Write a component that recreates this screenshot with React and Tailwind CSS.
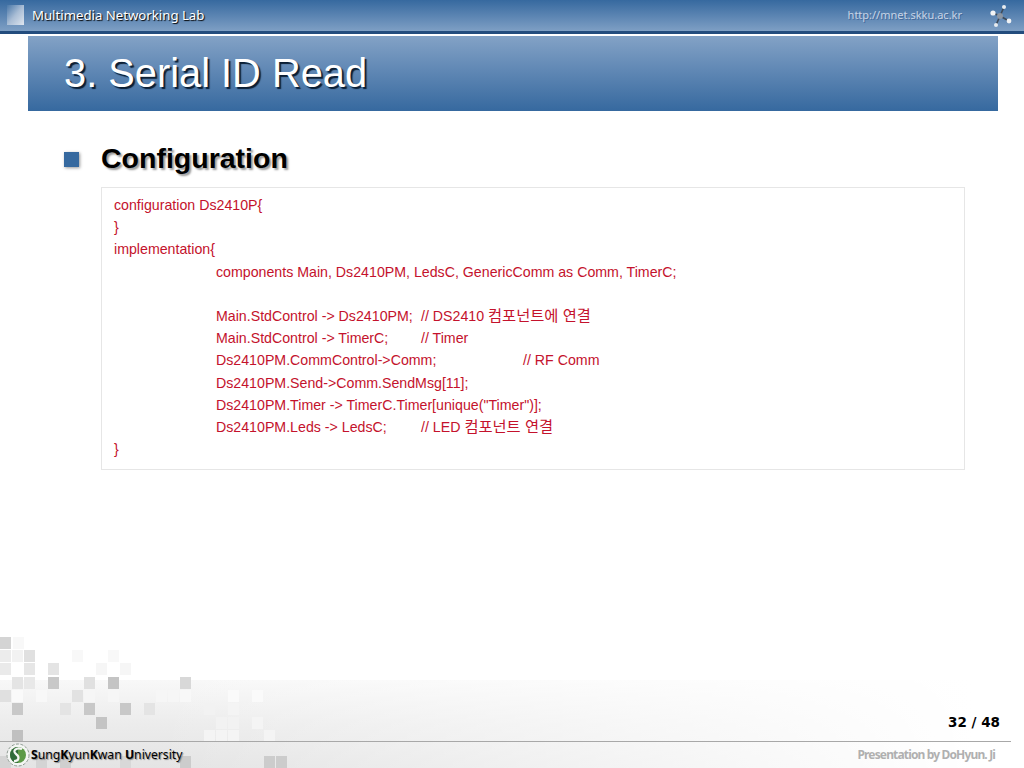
const code = [
  { t: "configuration Ds2410P{" },
  { t: "}" },
  { t: "implementation{" },
  { i: 1, t: "components Main, Ds2410PM, LedsC, GenericComm as Comm, TimerC;" },
  { i: 1, t: "\u00a0" },
  { i: 1, a: "Main.StdControl -> Ds2410PM;", w: "w-[205px]", t: "// DS2410 ", k: "컴포넌트에 연결" },
  { i: 1, a: "Main.StdControl -> TimerC;", w: "w-[205px]", t: "// Timer" },
  { i: 1, a: "Ds2410PM.CommControl->Comm;", w: "w-[307px]", t: "// RF Comm" },
  { i: 1, t: "Ds2410PM.Send->Comm.SendMsg[11];" },
  { i: 1, t: 'Ds2410PM.Timer -> TimerC.Timer[unique("Timer")];' },
  { i: 1, a: "Ds2410PM.Leds -> LedsC;", w: "w-[205px]", t: "// LED ", k: "컴포넌트 연결" },
  { t: "}" },
];

const squares = [
  [0,637,"#d4d4d4"],[13,637,"#f8f8f8"],
  [0,650,"#ececec"],[12,650,"#f2f2f2"],[24,650,"#e0e0e0"],[72,650,"#f8f8f8"],[108,650,"#f8f8f8"],
  [0,663,"#eaeaea"],[24,663,"#e6e6e6"],[48,663,"#e4e4e4"],[96,663,"#f6f6f6"],[120,663,"#f6f6f6"],
  [12,677,"#e4e4e4"],[24,677,"#e8e8e8"],[48,677,"#c8c8c8"],[84,677,"#e0e0e0"],[108,677,"#c4c4c4"],[180,677,"#d8d8d8"],
  [12,690,"#fafafa"],[36,690,"#f8f8f8"],[84,690,"#f6f6f6"],[108,690,"#f6f6f6"],[156,690,"#f6f6f6"],[168,690,"#f6f6f6"],[180,690,"#f8f8f8"],[228,690,"#fafafa"],[252,690,"#fafafa"],[0,690,"#e0e0e0"],[72,690,"#e2e2e2"],
  [12,703,"#c8c8c8"],[60,703,"#e4e4e4"],[84,703,"#c8c8c8"],[120,703,"#c8c8c8"],[144,703,"#e4e4e4"],[204,703,"#f2f2f2"],[228,703,"#f4f4f4"],
  [96,717,"#c4c4c4"],[216,717,"#f2f2f2"],[228,717,"#f2f2f2"],[252,717,"#f4f4f4"],
  [12,730,"#c0c0c0"],[204,730,"#f4f4f4"],[216,730,"#f4f4f4"],[228,730,"#f4f4f4"],[264,730,"#f4f4f4"],
  [0,756,"#d4d4d4"],[36,756,"#d4d4d4"],[60,756,"#cfcfcf"],[120,756,"#d8d8d8"],[180,756,"#cccccc"],[264,756,"#cccccc"],[276,756,"#cccccc"],
];

export default function App() {
  return (
    <div className="relative flex h-[768px] w-[1024px] flex-col overflow-hidden bg-white font-['Liberation_Sans',sans-serif]">
      <header className="flex h-[31px] shrink-0 items-center bg-gradient-to-b from-[#36699f] to-[#7e9fc4]">
        <div className="ml-[7px] mt-[-1px] h-[20px] w-[17px] bg-gradient-to-br from-[#4a78a8] via-[#a9bdd5] to-[#dfe6ef]" />
        <span className="ml-[8px] font-['Noto_Sans',sans-serif] text-[13.2px] leading-none text-white [text-shadow:1px_1px_1px_#000]">Multimedia Networking Lab</span>
        <span className="ml-auto mt-[-3px] font-['Noto_Sans',sans-serif] text-[11px] leading-none text-[#c6d4e6] [text-shadow:1px_1px_0_#44699a]">http://mnet.skku.ac.kr</span>
        <svg className="ml-[26px] mr-[12px] h-[24px] w-[24px] blur-[0.4px]" viewBox="0 0 24 24">
          <g stroke="#3f4a58" strokeWidth="1.6">
            <line x1="12" y1="12" x2="16" y2="3" />
            <line x1="12" y1="12" x2="5" y2="9" />
            <line x1="12" y1="12" x2="21" y2="17" />
            <line x1="12" y1="12" x2="8" y2="21" />
          </g>
          <circle cx="12" cy="12" r="3" fill="#8b96a4" />
          <circle cx="16" cy="3" r="2" fill="#e8ecf0" />
          <circle cx="5" cy="9" r="2.6" fill="#f2f4f6" />
          <circle cx="21" cy="17" r="2.4" fill="#eef1f4" />
          <circle cx="8" cy="21" r="2" fill="#e8ecf0" />
        </svg>
      </header>
      <div className="h-[3px] shrink-0 bg-[#234c7d]" />

      <div className="ml-[28px] mt-[2px] flex h-[75px] w-[970px] shrink-0 items-center bg-gradient-to-b from-[#83a2c6] to-[#36699f] pl-[36px]">
        <h1 className="text-[39.8px] leading-none text-white [text-shadow:2px_2px_1px_#0b1e33]">3. Serial ID Read</h1>
      </div>

      <main className="relative z-10 ml-[64px] mt-[30px] w-[901px]">
        <div className="flex h-[36px] items-center">
          <span className="h-[15px] w-[15px] bg-[#36699f] shadow-[1px_1px_3px_#999]" />
          <h2 className="ml-[22px] mt-[-2px] text-[28.5px] font-bold leading-none text-black [text-shadow:2px_2px_2px_#999]">Configuration</h2>
        </div>
        <section className="ml-[37px] mt-[10px] h-[283px] w-[864px] border border-[#e6e6e6] pl-[12px] pt-[6px] text-[14.2px] leading-[22.2px] text-[#c4122c] font-['Liberation_Sans','Noto_Sans_CJK_KR',sans-serif]">
          {code.map((l, n) => (
            <div key={n} className={l.i ? "h-[22.2px] whitespace-pre pl-[102px]" : "h-[22.2px] whitespace-pre"}>
              {l.a && <span className={`inline-block ${l.w}`}>{l.a}</span>}
              {l.t}
              {l.k && <span className="text-[15.3px]">{l.k}</span>}
            </div>
          ))}
        </section>
      </main>

      <footer className="absolute bottom-0 left-0 h-[131px] w-full">
        <div className="absolute inset-x-0 bottom-0 h-[88px] bg-gradient-to-b from-[#f8f8f8] via-[#ececec] to-[#e4e4e4]" />
        <div className="absolute inset-x-0 bottom-0 h-[88px] bg-gradient-to-r from-transparent from-15% to-white to-95%" />
        <svg className="absolute left-0 top-0 h-[131px] w-[300px]" viewBox="0 637 300 131">
          {squares.map(([x, y, c], i) => (
            <rect key={i} x={x} y={y} width="11" height="12" fill={c} />
          ))}
        </svg>
        <div className="relative flex h-full flex-col justify-end">
          <div className="self-end pr-[24px] font-['DejaVu_Sans',sans-serif] text-[13.5px] font-bold leading-none text-black">32 / 48</div>
          <div className="mt-[12px] h-px w-[1011px] bg-[#a8a8a8]" />
          <div className="flex h-[26px] items-center">
            <svg className="ml-[6px] h-[24px] w-[24px]" viewBox="0 0 24 24">
              <circle cx="12" cy="12" r="11" fill="#f4f6f4" stroke="#8e9a92" strokeDasharray="3 1.5" />
              <circle cx="12" cy="12" r="8" fill="#5c9a46" />
              <path d="M12 4 A8 8 0 0 0 12 20 Z" fill="#2f6b3a" />
              <path d="M16 6 C10 4 6 8 10 11 C14 14 13 18 8 18" fill="none" stroke="#f4f6f4" strokeWidth="2.2" />
            </svg>
            <span className="ml-[1px] font-['Noto_Sans',sans-serif] text-[12.2px] leading-none text-black [text-shadow:1px_1px_1px_#888]">
              <b>S</b>ung<b>K</b>yun<b>K</b>wan <b>U</b>niversity
            </span>
            <span className="ml-auto mr-[29px] font-['Noto_Sans',sans-serif] text-[12px] font-bold leading-none tracking-[-0.85px] text-[#b0b0b0]">Presentation by DoHyun. Ji</span>
          </div>
        </div>
      </footer>
    </div>
  );
}
